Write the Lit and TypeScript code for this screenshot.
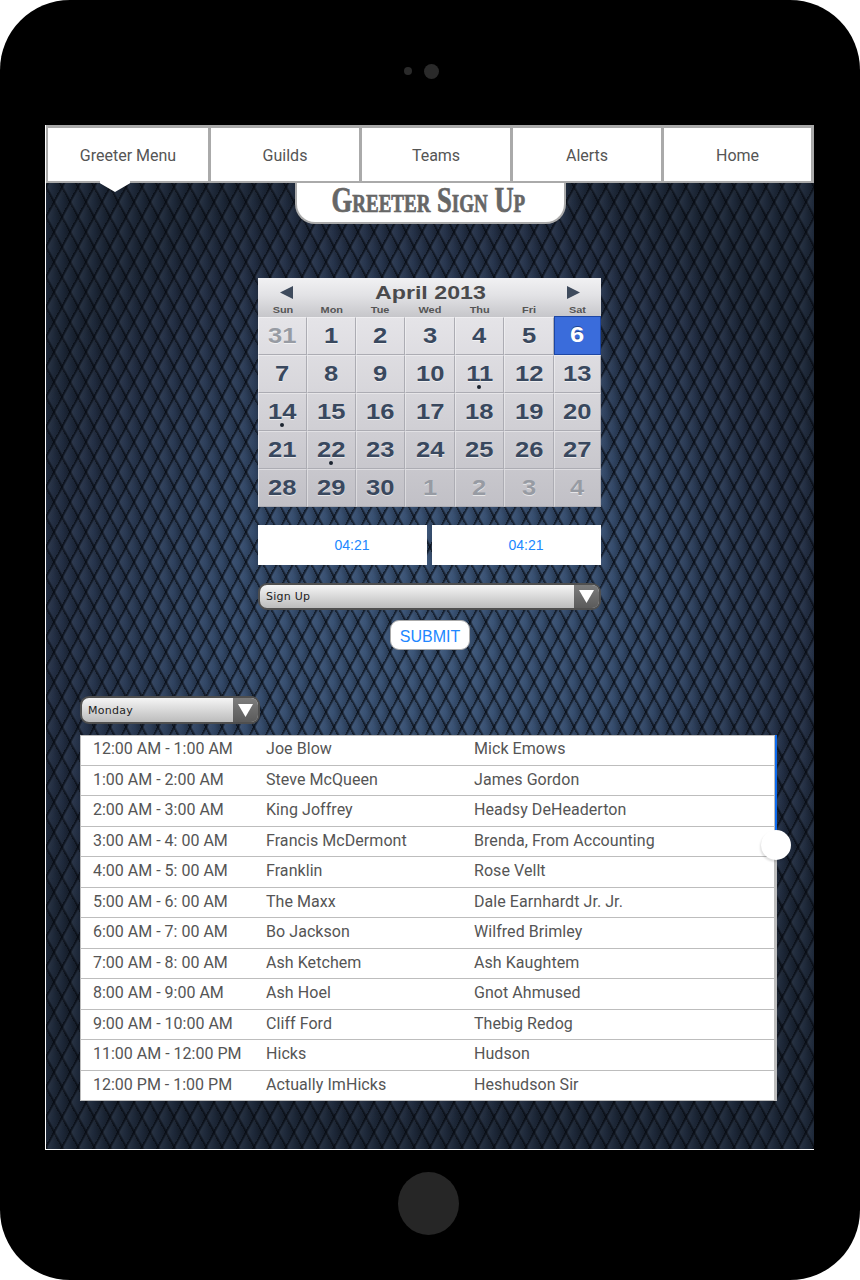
import { LitElement, css, html } from "lit";
import { customElement } from "lit/decorators.js";
import { classMap } from "lit/directives/class-map.js";

const NAV = ["Greeter Menu", "Guilds", "Teams", "Alerts", "Home"];
const WEEK = ["Sun", "Mon", "Tue", "Wed", "Thu", "Fri", "Sat"];

type Day = { n: number; off?: boolean; sel?: boolean; dot?: boolean };

const DAYS: Day[] = [
  { n: 31, off: true },
  ...Array.from({ length: 30 }, (_, i): Day => ({
    n: i + 1,
    sel: i + 1 === 6,
    dot: [11, 14, 22].includes(i + 1),
  })),
  { n: 1, off: true },
  { n: 2, off: true },
  { n: 3, off: true },
  { n: 4, off: true },
];

const ROWS = [
  ["12:00 AM - 1:00 AM", "Joe Blow", "Mick Emows"],
  ["1:00 AM - 2:00 AM", "Steve McQueen", "James Gordon"],
  ["2:00 AM - 3:00 AM", "King Joffrey", "Headsy DeHeaderton"],
  ["3:00 AM - 4: 00 AM", "Francis McDermont", "Brenda, From Accounting"],
  ["4:00 AM - 5: 00 AM", "Franklin", "Rose Vellt"],
  ["5:00 AM - 6: 00 AM", "The Maxx", "Dale Earnhardt Jr. Jr."],
  ["6:00 AM - 7: 00 AM", "Bo Jackson", "Wilfred Brimley"],
  ["7:00 AM - 8: 00 AM", "Ash Ketchem", "Ash Kaughtem"],
  ["8:00 AM - 9:00 AM", "Ash Hoel", "Gnot Ahmused"],
  ["9:00 AM - 10:00 AM", "Cliff Ford", "Thebig Redog"],
  ["11:00 AM - 12:00 PM", "Hicks", "Hudson"],
  ["12:00 PM - 1:00 PM", "Actually ImHicks", "Heshudson Sir"],
];

@customElement("app-root")
export class AppRoot extends LitElement {
  static styles = css`
    :host {
      display: block;
      width: 860px;
      height: 1280px;
      background: #fff;
    }
    .tablet {
      height: 1280px;
      background: #000;
      border-radius: 70px;
      display: flex;
      flex-direction: column;
      align-items: center;
    }
    .top {
      height: 125px;
      display: flex;
      align-items: center;
      gap: 12px;
      padding: 17px 18px 0 0;
      box-sizing: border-box;
    }
    .cam-small {
      width: 8px;
      height: 8px;
      border-radius: 50%;
      background: #2a2a2a;
    }
    .cam-big {
      width: 15px;
      height: 15px;
      border-radius: 50%;
      background: #2a2a2a;
    }
    .home-btn {
      width: 61px;
      height: 63px;
      margin: 22px 3px 0 0;
      border-radius: 50%;
      background: #262626;
    }

    .screen {
      box-sizing: border-box;
      align-self: flex-start;
      margin-left: 45px;
      width: 769px;
      height: 1025px;
      border-left: 1px solid #fff;
      border-bottom: 1px solid #fff;
      display: flex;
      flex-direction: column;
      align-items: center;
      background-color: #1a2535;
      background-image:
        repeating-linear-gradient(118.07deg, rgba(5, 8, 14, 0.72) 0, rgba(5, 8, 14, 0.6) 1.2px, rgba(255, 255, 255, 0.03) 2.8px, rgba(0, 0, 0, 0) 8px, rgba(0, 0, 0, 0.14) 14.12px),
        repeating-linear-gradient(61.93deg, rgba(5, 8, 14, 0.72) 0, rgba(5, 8, 14, 0.6) 1.2px, rgba(255, 255, 255, 0.02) 2.8px, rgba(0, 0, 0, 0) 8px, rgba(0, 0, 0, 0.18) 14.12px),
        radial-gradient(ellipse 58% 48% at 50% 50%, #3b5578 0%, #344b6c 45%, #232f45 85%, #1d2839 100%);
    }

    nav {
      align-self: stretch;
      display: grid;
      grid-template-columns: 165px repeat(3, 151px) 150px;
      height: 58px;
      position: relative;
    }
    .tab {
      box-sizing: border-box;
      background: #fff;
      border: solid #aaa;
      border-width: 3px 3px 2px 0;
      padding-top: 2px;
      display: flex;
      align-items: center;
      justify-content: center;
      font: 16px Roboto, sans-serif;
      color: #555;
    }
    .tab:first-child {
      border-left-width: 2px;
    }
    .tab:last-child {
      border-right-width: 2px;
      padding-top: 4px;
    }
    .notch {
      position: absolute;
      left: 54px;
      top: 56px;
      width: 30px;
      height: 11px;
      background: #fff;
      clip-path: polygon(0 0, 100% 0, 100% 20%, 50% 100%, 0 20%);
    }

    .title {
      box-sizing: border-box;
      width: 271px;
      height: 41px;
      margin-left: 1px;
      background: #fff;
      border: solid #aaa;
      border-width: 0 2px 2px;
      border-radius: 0 0 20px 20px;
      display: flex;
      justify-content: center;
      font: bold 35px "Liberation Serif", serif;
      font-variant: small-caps;
      line-height: 35px;
      color: #666;
      white-space: nowrap;
    }
    .title span {
      display: inline-block;
      margin-right: 4px;
      transform: scaleX(0.76);
      -webkit-text-stroke: 0.7px #666;
    }

    .cal {
      width: 343px;
      margin: 54px 1px 0 0;
      font-family: "Liberation Sans", sans-serif;
    }
    .cal-head {
      height: 39px;
      box-sizing: border-box;
      background: linear-gradient(#f1f1f3, #e2e2e5 45%, #c6c6ca);
      display: flex;
      flex-direction: column;
    }
    .month {
      display: flex;
      align-items: center;
      justify-content: space-between;
      padding: 3px 21px 0 22px;
      height: 23px;
    }
    .month b {
      display: inline-block;
      font-size: 19px;
      color: #4a4a4c;
      transform: scaleX(1.22);
    }
    .weekdays {
      display: grid;
      grid-template-columns: 49px 49px 49px 50px 49px 50px 47px;
      font: bold 9.5px "Liberation Sans", sans-serif;
      color: #555;
      text-align: center;
      line-height: 12px;
    }
    .weekdays span {
      display: inline-block;
      transform: scaleX(1.15);
    }
    .grid {
      display: grid;
      grid-template-columns: 49px 49px 49px 50px 49px 50px 47px;
      grid-auto-rows: 38px;
      background: linear-gradient(#e5e4e8, #d3d2d7 50%, #c1c0c6);
    }
    .day {
      box-sizing: border-box;
      position: relative;
      display: flex;
      align-items: center;
      justify-content: center;
      padding-bottom: 1px;
      border-top: 1px solid rgba(255, 255, 255, 0.4);
      border-left: 1px solid rgba(255, 255, 255, 0.4);
      border-right: 1px solid #acacb3;
      border-bottom: 1px solid #acacb3;
      font-size: 22px;
      font-weight: bold;
      color: #39485e;
      text-shadow: 0 1px 0 rgba(255, 255, 255, 0.6);
    }
    .day span {
      display: inline-block;
      transform: scaleX(1.16);
    }
    .day.off {
      color: #979ba3;
    }
    .day.sel {
      margin-top: -1px;
      background: #3a6cdb;
      border: 1px solid #1d46a3;
      color: #fff;
      text-shadow: 0 -1px 0 #22468f;
    }
    .dot {
      position: absolute;
      left: 20.5px;
      bottom: 3px;
      width: 4px;
      height: 4px;
      border-radius: 50%;
      background: #1c2430;
    }

    .times {
      width: 343px;
      margin: 18px 1px 0 0;
      display: flex;
      gap: 5px;
    }
    .time {
      box-sizing: border-box;
      flex: 1;
      height: 40px;
      padding-left: 19px;
      background: #fff;
      display: flex;
      align-items: center;
      justify-content: center;
      font: 14px "Liberation Sans", sans-serif;
      color: #2187ff;
    }

    .select {
      box-sizing: border-box;
      height: 27px;
      border: 2px solid #4f4f4f;
      border-radius: 9px;
      display: flex;
      overflow: hidden;
      font: 11px "DejaVu Sans", sans-serif;
      letter-spacing: 0.25px;
      color: #222;
      background: linear-gradient(#f5f5f5, #bcbcbc);
    }
    .select .label {
      flex: 1;
      padding-left: 6px;
      display: flex;
      align-items: center;
    }
    .select .drop {
      width: 25px;
      background: linear-gradient(#7d7d7d, #5a5a5a);
      display: flex;
      align-items: center;
      justify-content: center;
    }
    .signup {
      width: 343px;
      margin: 18px 1px 0 0;
    }
    .submit {
      box-sizing: border-box;
      width: 80px;
      height: 30px;
      margin-top: 10px;
      padding-top: 3px;
      background: #fff;
      border: 1px solid #aaa;
      border-radius: 9px;
      display: flex;
      align-items: center;
      justify-content: center;
      font: 16px "Liberation Sans", sans-serif;
      color: #2187ff;
    }

    .lower {
      align-self: stretch;
      padding-left: 34px;
      margin-top: 46px;
    }
    .monday {
      width: 180px;
      height: 28px;
    }
    .table {
      box-sizing: border-box;
      position: relative;
      width: 697px;
      height: 366px;
      margin-top: 11px;
      background: #fff;
      border: solid #bdbdbd;
      border-width: 0 3px 0 1px;
      box-shadow: inset 0 1px #bdbdbd;
      display: flex;
      flex-direction: column;
      font: 16px Roboto, sans-serif;
      color: #555;
    }
    .row {
      box-sizing: border-box;
      flex: none;
      height: 30.5px;
      display: grid;
      grid-template-columns: 173px 208px 1fr;
      align-items: center;
      padding: 0 0 2.4px 12px;
      border-bottom: 1px solid #bdbdbd;
      white-space: nowrap;
    }
    .row span + span {
      letter-spacing: 0.06px;
    }
    .bar {
      position: absolute;
      top: 0;
      right: -3px;
      width: 2px;
      height: 110px;
      background: #0d6bf0;
    }
    .thumb {
      position: absolute;
      top: 95px;
      right: -17px;
      width: 30px;
      height: 30px;
      border-radius: 50%;
      background: #fff;
      box-shadow: -1px 2px 2px rgba(0, 0, 0, 0.12);
    }
  `;

  private renderSelect(label: string, cls: string) {
    return html`<div class="select ${cls}">
      <div class="label">${label}</div>
      <div class="drop">
        <svg width="15" height="13" viewBox="0 0 15 13"><path d="M0 0H15L7.5 13Z" fill="#fff" /></svg>
      </div>
    </div>`;
  }

  render() {
    return html`
      <div class="tablet">
        <div class="top">
          <div class="cam-small"></div>
          <div class="cam-big"></div>
        </div>
        <div class="screen">
          <nav>
            ${NAV.map((n) => html`<div class="tab">${n}</div>`)}
            <div class="notch"></div>
          </nav>
          <div class="title"><span>Greeter Sign Up</span></div>
          <div class="cal">
            <div class="cal-head">
              <div class="month">
                <svg width="13" height="13" viewBox="0 0 13 13"><path d="M13 0V13L0 6.5Z" fill="#3e4a5c" /></svg>
                <b>April 2013</b>
                <svg width="13" height="13" viewBox="0 0 13 13"><path d="M0 0V13L13 6.5Z" fill="#3e4a5c" /></svg>
              </div>
              <div class="weekdays">${WEEK.map((w) => html`<div><span>${w}</span></div>`)}</div>
            </div>
            <div class="grid">
              ${DAYS.map(
                (d) => html`<div class=${classMap({ day: true, off: !!d.off, sel: !!d.sel })}>
                  <span>${d.n}</span>${d.dot ? html`<i class="dot"></i>` : ""}
                </div>`,
              )}
            </div>
          </div>
          <div class="times">
            <div class="time">04:21</div>
            <div class="time">04:21</div>
          </div>
          ${this.renderSelect("Sign Up", "signup")}
          <div class="submit">SUBMIT</div>
          <div class="lower">
            ${this.renderSelect("Monday", "monday")}
            <div class="table">
              ${ROWS.map(
                (r) => html`<div class="row"><span>${r[0]}</span><span>${r[1]}</span><span>${r[2]}</span></div>`,
              )}
              <div class="bar"></div>
              <div class="thumb"></div>
            </div>
          </div>
        </div>
        <div class="home-btn"></div>
      </div>
    `;
  }
}
